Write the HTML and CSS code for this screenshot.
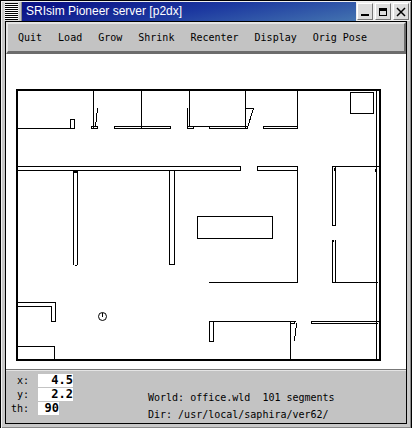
FILE: index.html
```html
<!DOCTYPE html>
<html lang="en">
<head>
<meta charset="utf-8">
<title>SRIsim Pioneer server [p2dx]</title>
<link rel="stylesheet" href="styles.css">
</head>
<body>
<div class="window">
  <header class="titlebar">
    <button class="grip" aria-label="Window menu"></button>
    <h1 class="title">SRIsim Pioneer server [p2dx]</h1>
    <div class="controls">
      <button class="control" aria-label="Minimize"><svg width="12" height="12" shape-rendering="crispEdges"><path d="M2 8h8v2H2z"/></svg></button>
      <button class="control" aria-label="Maximize"><svg width="12" height="12" shape-rendering="crispEdges"><path fill-rule="evenodd" d="M2 2h8v8H2zM3 5v4h6V5z"/></svg></button>
      <button class="control" aria-label="Close"><svg width="12" height="12"><path class="cross" d="M2 2l8 8M10 2l-8 8"/></svg></button>
    </div>
  </header>
  <main class="content">
    <nav class="menubar">
      <button class="menu">Quit</button>
      <button class="menu">Load</button>
      <button class="menu">Grow</button>
      <button class="menu">Shrink</button>
      <button class="menu">Recenter</button>
      <button class="menu">Display</button>
      <button class="menu">Orig Pose</button>
    </nav>
    <svg class="world" viewBox="6 54 400 315" role="img" aria-label="Office floor plan with robot">
      <rect class="outer" x="17" y="90" width="363" height="270"/>
      <g class="walls" transform="translate(.5 .5)">
        <!-- upper rooms -->
        <path d="M18 128H74V119H70V128M93 90V128M91 126H97V128H91zM97 108V112M96 113V121M95 122V126"/>
        <path d="M141 90V128M114 126H170V128H114zM187 108V128H193V126H187M189 90V126M193 126H209M209 126H247V128H209zM245 90V128"/>
        <path d="M245 108H253L247 127M263 126H297V128H263zM297 90V128M350 92H373V113H350zM376 90V360"/>
        <!-- corridor and middle rooms -->
        <path d="M18 166H240V170H18M297 170H257V166H297V282H209"/>
        <path d="M73 264V171H77V264M73 172H77M75 265H76M169 170V264H174V170M197 216H272V238H197z"/>
        <path d="M379 166H332V225M333 225H335V166M334 168V170M375 169V171M332 282V240M333 240V241M335 240V282M332 282H377"/>
        <!-- lower rooms -->
        <path d="M18 302H55V321H51V306H18M18 346H54V360"/>
        <path d="M295 321H209V341H213V321M290 321V360M290 323H294V321M296 323V327M295 328V335M294 336V340M379 321H311V323H377"/>
      </g>
      <g class="robot"><circle cx="102.500" cy="316.500" r="4"/><path d="M102.500 313v4"/></g>
    </svg>
    <footer class="status">
      <form class="pose">
        <label for="x">x:</label><input id="x" class="value" value="4.5">
        <label for="y">y:</label><input id="y" class="value" value="2.2">
        <label for="th">th:</label><input id="th" class="value angle" value="90">
      </form>
      <div class="info">
        <p>World: office.wld&nbsp; 101 segments</p>
        <p>Dir: /usr/local/saphira/ver62/</p>
      </div>
    </footer>
  </main>
</div>
</body>
</html>
```
FILE: styles.css
```css
* { box-sizing: border-box; }

body {
  margin: 0;
  font: 10px/14px "DejaVu Sans Mono", monospace;
  color: #000;
}

button {
  margin: 0;
  padding: 0;
  border: 0;
  font: inherit;
  color: inherit;
}

.window {
  display: flex;
  flex-direction: column;
  min-height: 100vh;
  padding: 1px 4px 4px;
  border: 1px solid #000;
  background: #c8c8c8;
  box-shadow: inset 1px 1px #f0f0f0, inset -1px -1px #888;
}

.titlebar {
  display: flex;
  height: 19px;
}

.grip {
  width: 15px;
  margin: 0 2px 0 -1px;
  border: 1px solid #ddd;
  background: repeating-linear-gradient(#000 0 1px, #fff 1px 2px);
}

.title {
  flex: 1;
  margin: 0;
  padding-left: 4px;
  border-left: 1px solid #888;
  font: 12px/19px "Liberation Sans", sans-serif;
  white-space: nowrap;
  color: #fff;
  background: linear-gradient(170deg, #0c1488 10%, #1c38a0 50%, #4474b0);
}

.controls {
  display: flex;
  gap: 2px;
  margin-right: -3px;
  padding: 1px;
  background: #eee;
}

.control {
  display: grid;
  place-items: center;
  width: 16px;
  height: 17px;
  border: 1px solid;
  border-color: #fff #777 #777 #fff;
  background: #ddd;
}

.cross {
  stroke: #000;
  stroke-width: 1.5;
}

.content {
  display: flex;
  flex: 1;
  flex-direction: column;
  border: 1px solid #000;
  background: #c3c3c3;
}

.menubar {
  display: flex;
  gap: 16px;
  height: 32px;
  padding: 0 10px;
  border: solid;
  border-width: 2px 2px 3px;
  border-color: #e4e4e4 #6c6c6c #6c6c6c #e4e4e4;
}

.menu { background: none; }

.world {
  display: block;
  width: 100%;
  background: #fff;
  fill: none;
  stroke: #000;
}

.outer {
  stroke-width: 2;
  shape-rendering: crispEdges;
}

.walls {
  stroke-linecap: square;
  shape-rendering: crispEdges;
}

.status {
  display: flex;
  flex: 1;
  border-top: 1px solid #777;
  box-shadow: inset 0 1px #e4e4e4;
}

.pose {
  display: grid;
  grid-template-columns: 23px 36px;
  grid-auto-rows: 14px;
  column-gap: 9px;
  padding-top: 4px;
  text-align: right;
}

.value {
  width: 35px;
  height: 13px;
  padding: 0;
  border: 0;
  background: #fff;
  font: bold 12px/13px "DejaVu Sans Mono", monospace;
  text-align: right;
}

.angle { width: 21px; }

.info {
  margin-left: 74px;
  padding-top: 19px;
  line-height: 17px;
}

.info p { margin: 0; }
```
